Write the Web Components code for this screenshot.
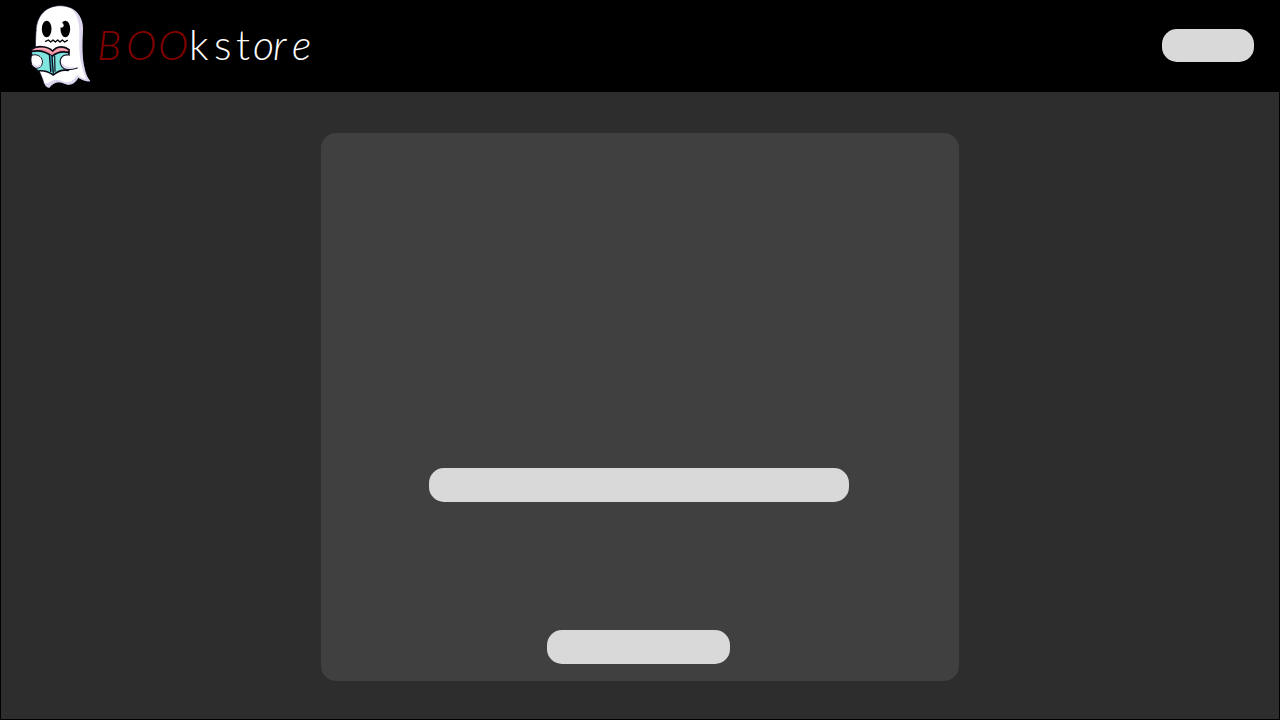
<!DOCTYPE html>
<html lang="en"><head><meta charset="utf-8"><title>BOOkstore</title>
<style>html,body{margin:0;height:100%;background:#000;overflow:hidden}</style></head>
<body>
<book-app></book-app>
<script>
const define=(name,html)=>customElements.define(name,class extends HTMLElement{
  constructor(){super();this.attachShadow({mode:'open'}).innerHTML=html;}
});
define('ghost-logo',`<style>:host{display:block;width:80px;height:92px}svg{display:block}</style>
<svg width="80" height="92" viewBox="0 0 240 276" stroke-linejoin="round" stroke-linecap="round">
<path d="M48 92C50 45 79 17 121 17C163 17 188 45 189 87C187 124 185 164 193 202C197 221 202 234 211 244C198 244 186 240 175 233C167 248 156 255 143 254C134 253 126 247 117 247C104 247 97 253 88 263C77 264 72 252 68 238L57 211C43 178 46 132 48 92Z" fill="#fff" stroke="#110d25" stroke-width="2"/>
<path d="M153 25C175 36 189 57 189 87C187 124 185 164 193 202C197 221 202 234 211 244C198 244 186 240 175 233C167 248 156 255 143 254C134 253 126 247 117 247C104 247 97 253 88 263C80 263 77 257 73 249C85 254 92 240 108 239C123 238 133 250 148 246C161 243 165 231 173 225C181 232 188 236 198 237C184 204 177 166 178 130C179 91 181 51 153 25Z" fill="#dcd5ed"/>
<ellipse cx="80" cy="87" rx="14.5" ry="25" fill="#000"/><ellipse cx="136" cy="87" rx="14.5" ry="25" fill="#000"/>
<ellipse cx="125" cy="76" rx="6" ry="7" fill="#fff"/>
<path d="M77 124L85 120L92 126L99 120L106 126L113 120L120 126L127 120L134 126L142 121" fill="none" stroke="#000" stroke-width="4"/>
<path d="M34 154L34 149C48 137 80 136 98 153C111 137 133 137 147 149L147 157L98 168Z" fill="#f08b9b" stroke="#080b17" stroke-width="5"/>
<path d="M44 148Q73 139 96 158M104 157Q121 141 140 151" fill="none" stroke="#f9bdc5" stroke-width="3"/>
<path d="M33 155Q68 147 96 169Q119 150 147 158L145 211Q119 207 100 225Q77 209 52 213Q38 194 33 155Z" fill="#80e4df" stroke="#080b17" stroke-width="5"/>
<path d="M89 163L97 170L101 220L91 214Z" fill="#399bac"/>
<path d="M96 168L100 220M88 164L92 214M104 169L105 214" fill="none" stroke="#080b17" stroke-width="3.5"/>
<path d="M35 166C50 160 65 169 67 182C69 197 59 207 46 204C33 200 30 178 35 166Z" fill="#fff" stroke="#11101e" stroke-width="3"/>
<path d="M38 193Q48 205 60 197" fill="none" stroke="#dcd5ed" stroke-width="5"/>
<path d="M145 165C126 162 117 177 122 193C128 210 146 212 169 204L175 187L163 161L149 168Z" fill="#fff"/>
<path d="M145 165C126 162 117 177 122 193C128 210 147 212 172 204" fill="none" stroke="#11101e" stroke-width="3.5"/>
<path d="M127 192Q135 207 160 203" fill="none" stroke="#dcd5ed" stroke-width="4"/>
</svg>`);
define('brand-name',`<style>:host{display:block;width:230px;height:92px}svg{display:block}
text{font-family:Lato,"Open Sans",sans-serif;font-weight:300;font-size:41px}
.boo{fill:#800000;font-style:italic}.rest{fill:#fff}.slant{font-style:italic}</style>
<svg width="230" height="92" viewBox="90 0 230 92"><text y="60"><tspan class="boo" x="97 126 158">BOO</tspan><tspan class="rest" x="189 214 236">kst</tspan><tspan class="rest slant" x="253 273 292">ore</tspan></text></svg>`);
define('pill-box',`<style>:host{display:block;box-sizing:border-box;background:#d9d9d9;border-radius:15px}</style><slot></slot>`);
define('site-header',`<style>:host{display:flex;align-items:flex-start;box-sizing:border-box;height:92px;padding:0 26px 0 20px;background:#000}
brand-name{margin-left:-10px}pill-box{width:92px;height:33px;margin:29px 0 0 auto}</style>
<ghost-logo></ghost-logo><brand-name></brand-name><pill-box></pill-box>`);
define('form-card',`<style>:host{display:flex;flex-direction:column;align-items:center;box-sizing:border-box;width:638px;height:548px;padding-top:335px;background:#404040;border-radius:15px}
.field{width:420px;height:34px;margin-right:2px}.action{width:183px;height:34px;margin:128px 3px 0 0}</style>
<pill-box class="field"></pill-box><pill-box class="action"></pill-box>`);
define('book-app',`<style>:host{display:flex;flex-direction:column;width:1280px;height:720px;background:#000}
main{display:flex;justify-content:center;box-sizing:border-box;flex:1;margin:0 1px 1px;padding-top:41px;background:#2d2d2d}</style>
<site-header></site-header><main><form-card></form-card></main>`);
</script>
</body></html>
